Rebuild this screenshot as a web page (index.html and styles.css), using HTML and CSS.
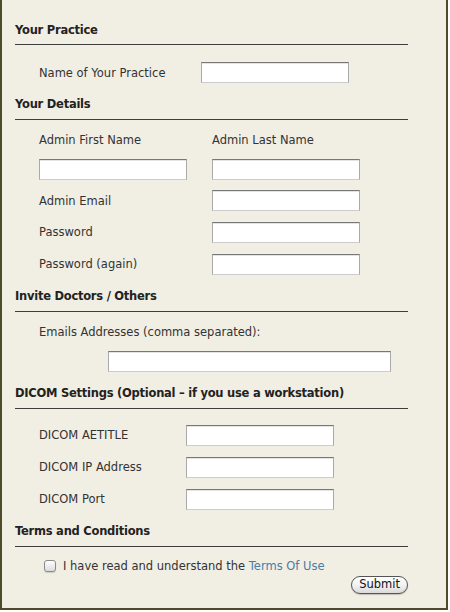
FILE: index.html
```html
<!DOCTYPE html>
<html>
<head>
<meta charset="utf-8">
<link rel="stylesheet" href="styles.css">
</head>
<body>
<form class="panel">
  <section class="sec sec-practice">
    <h2 class="sec-title">Your Practice</h2>
    <div class="rows rows-practice">
      <label class="lbl">Name of Your Practice</label>
      <input class="field" type="text">
    </div>
  </section>

  <section class="sec sec-details">
    <h2 class="sec-title">Your Details</h2>
    <div class="rows rows-details">
      <label class="lbl">Admin First Name</label>
      <label class="lbl">Admin Last Name</label>
      <input class="field" type="text">
      <input class="field" type="text">
      <label class="lbl">Admin Email</label>
      <input class="field" type="text">
      <label class="lbl">Password</label>
      <input class="field" type="password">
      <label class="lbl">Password (again)</label>
      <input class="field" type="password">
    </div>
  </section>

  <section class="sec sec-invite">
    <h2 class="sec-title">Invite Doctors / Others</h2>
    <div class="invite">
      <label class="lbl lbl-invite">Emails Addresses (comma separated):</label>
      <input class="field field-wide" type="text">
    </div>
  </section>

  <section class="sec sec-dicom">
    <h2 class="sec-title">DICOM Settings (Optional &#8211; if you use a workstation)</h2>
    <div class="rows rows-dicom">
      <label class="lbl">DICOM AETITLE</label>
      <input class="field" type="text">
      <label class="lbl">DICOM IP Address</label>
      <input class="field" type="text">
      <label class="lbl">DICOM Port</label>
      <input class="field" type="text">
    </div>
  </section>

  <section class="sec sec-terms">
    <h2 class="sec-title">Terms and Conditions</h2>
    <label class="agree">
      <input class="check" type="checkbox">
      <span>I have read and understand the <a class="link" href="#">Terms Of Use</a></span>
    </label>
    <div class="actions">
      <button class="submit" type="button">Submit</button>
    </div>
  </section>
</form>
</body>
</html>
```

FILE: styles.css
```css
html, body {
  margin: 0;
  padding: 0;
  background: #ffffff;
}

body {
  font-family: "DejaVu Sans", "Lucida Grande", sans-serif;
  font-size: 11.5px;
  color: #333333;
}

.panel {
  box-sizing: border-box;
  width: 448px;
  height: 610px;
  margin: 0;
  padding: 20px 38px 0 13px;
  background: #f1eee4;
  border: 2px solid #4d4b2c;
  border-top: 0;
}

.sec {
  margin: 0 0 12px 0;
}

.sec-title {
  margin: 0;
  font-size: 11.5px;
  letter-spacing: -0.25px;
  font-weight: bold;
  line-height: 16px;
  color: #222222;
  padding-top: 1px;
  padding-bottom: 7px;
  border-bottom: 1px solid #3d3d3d;
}

.sec-practice .sec-title {
  padding-top: 2px;
  padding-bottom: 6px;
}

.lbl {
  line-height: 16px;
  align-self: center;
  white-space: nowrap;
}

.field {
  box-sizing: border-box;
  width: 148px;
  height: 21px;
  margin: 0;
  padding: 2px 3px;
  background: #ffffff;
  border: 1px solid #aaaaaa;
  border-top-color: #777777;
  border-bottom-color: #cccccc;
  box-shadow: inset 0 1px 0 #e4e4e4;
  font: inherit;
}

.rows {
  display: grid;
  padding-left: 24px;
}

.rows-practice {
  margin-top: 17px;
  grid-template-columns: 162px 148px;
  grid-template-rows: 21px;
}

.rows-details {
  margin-top: 12px;
  grid-template-columns: 173px 148px;
  grid-template-rows: 16px repeat(4, 21px);
  row-gap: 10.67px;
}

.invite {
  margin-top: 12px;
  padding-left: 24px;
  display: flex;
  flex-direction: column;
  align-items: flex-start;
  gap: 11px;
}

.lbl-invite {
  align-self: flex-start;
}

.field-wide {
  width: 283px;
  margin-left: 69px;
}

.rows-dicom {
  margin-top: 16px;
  grid-template-columns: 147px 148px;
  grid-template-rows: repeat(3, 21px);
  row-gap: 11px;
}

.sec-terms {
  margin-bottom: 0;
}

.agree {
  display: flex;
  align-items: center;
  gap: 7px;
  margin-top: 11px;
  padding-left: 29px;
  line-height: 16px;
}

.check {
  appearance: none;
  -webkit-appearance: none;
  box-sizing: border-box;
  width: 12px;
  height: 12px;
  margin: 0;
  border: 1px solid #8a8a8a;
  border-radius: 3px;
  background: linear-gradient(#ffffff, #dcdcdc);
  box-shadow: 0 1px 1px rgba(0, 0, 0, 0.15);
}

.link {
  color: #4a7ca6;
  text-decoration: none;
}

.actions {
  display: flex;
  justify-content: flex-end;
  margin-top: 2px;
}

.submit {
  box-sizing: border-box;
  height: 18px;
  padding: 0 7px;
  border: 1px solid #555555;
  border-radius: 9px;
  background: linear-gradient(#ffffff 0%, #f2f2f2 50%, #dadada 100%);
  box-shadow: 0 1px 1px rgba(0, 0, 0, 0.2);
  font-family: "DejaVu Sans", "Lucida Grande", sans-serif;
  font-size: 11.5px;
  line-height: 15px;
  color: #111111;
}
```
